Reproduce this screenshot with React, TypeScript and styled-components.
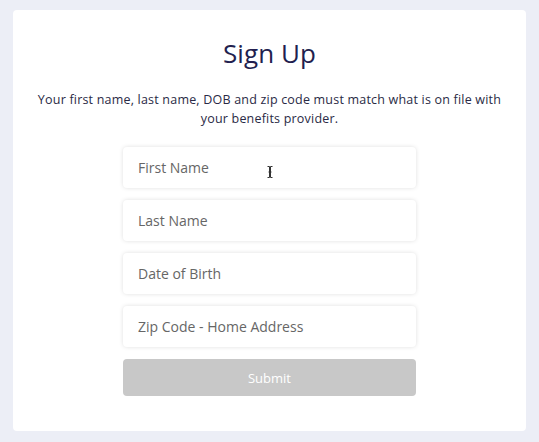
import React from 'react';
import styled, { createGlobalStyle } from 'styled-components';

const GlobalStyle = createGlobalStyle`
  html, body {
    margin: 0;
    padding: 0;
    background: #eceef6;
  }
  body {
    font-family: "Open Sans", "Noto Sans", sans-serif;
  }
`;

const Page = styled.div`
  width: 539px;
  height: 442px;
  box-sizing: border-box;
  padding: 10px 13px 11px 13px;
`;

const Card = styled.div`
  background: #ffffff;
  border-radius: 4px;
  height: 100%;
  box-sizing: border-box;
  display: flex;
  flex-direction: column;
  align-items: center;
  padding-top: 25px;
`;

const Title = styled.h1`
  margin: 0;
  font-size: 26px;
  font-weight: 500;
  color: #221f4f;
  line-height: 36px;
  letter-spacing: 0.1px;
`;

const Note = styled.p`
  margin: 19px 0 0 0;
  width: 470px;
  text-align: center;
  font-size: 12.5px;
  line-height: 19px;
  letter-spacing: 0.2px;
  color: #2a2a45;
`;

const Form = styled.form`
  margin-top: 19px;
  width: 293px;
  display: flex;
  flex-direction: column;
  gap: 12px;
`;

const Field = styled.div`
  position: relative;
`;

const Input = styled.input`
  width: 100%;
  height: 41px;
  box-sizing: border-box;
  border: none;
  border-radius: 4px;
  background: #ffffff;
  box-shadow: 0 0 4px rgba(0, 0, 0, 0.13);
  padding: 0 15px;
  font-family: inherit;
  font-size: 14px;
  color: #333;
  outline: none;

  &::placeholder {
    color: #666666;
  }
`;

const Cursor = styled.svg`
  position: absolute;
  left: 144px;
  top: 19px;
`;

const SubmitButton = styled.button`
  width: 100%;
  height: 37px;
  border: none;
  border-radius: 4px;
  background: #c8c8c8;
  color: #ffffff;
  font-family: inherit;
  font-size: 13px;
  font-weight: 500;
  cursor: default;
`;

const fields = [
  'First Name',
  'Last Name',
  'Date of Birth',
  'Zip Code - Home Address',
];

export default function App() {
  return (
    <>
      <GlobalStyle />
      <Page>
        <Card>
          <Title>Sign Up</Title>
          <Note>
            Your first name, last name, DOB and zip code must match what is on file with
            your benefits provider.
          </Note>
          <Form onSubmit={e => e.preventDefault()}>
            {fields.map((label, i) => (
              <Field key={label}>
                <Input placeholder={label} />
                {i === 0 && (
                  <Cursor width="6" height="12" viewBox="0 0 6 12">
                    <path d="M0.5 0.5h2v11h-2M5.5 0.5h-2v11h2M1.5 6h3" fill="none" stroke="#333" strokeWidth="1" />
                  </Cursor>
                )}
              </Field>
            ))}
            <SubmitButton type="submit" disabled>Submit</SubmitButton>
          </Form>
        </Card>
      </Page>
    </>
  );
}
